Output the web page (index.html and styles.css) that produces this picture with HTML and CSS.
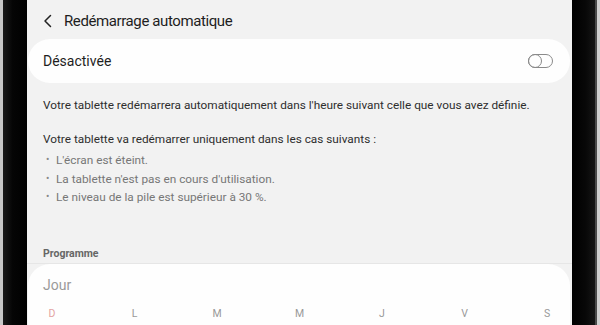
FILE: index.html
```html
<!DOCTYPE html>
<html lang="fr">
<head>
<meta charset="utf-8">
<link rel="stylesheet" href="styles.css">
</head>
<body>
<div class="device">
  <div class="bezel-left"><div class="edge"></div><div class="black"></div></div>
  <div class="screen">
    <div class="header">
      <svg class="back" width="10" height="14" viewBox="0 0 10 14"><path d="M7.5 1.5 L2 7 L7.5 12.5" fill="none" stroke="#222" stroke-width="1.5" stroke-linecap="round" stroke-linejoin="round"/></svg>
      <span class="title">Redémarrage automatique</span>
    </div>
    <div class="card switch-card">
      <span class="switch-label">Désactivée</span>
      <span class="toggle"><span class="thumb"></span></span>
    </div>
    <div class="info">
      <p class="para">Votre tablette redémarrera automatiquement dans l'heure suivant celle que vous avez définie.</p>
      <p class="para second">Votre tablette va redémarrer uniquement dans les cas suivants :</p>
      <ul class="bullets">
        <li>L'écran est éteint.</li>
        <li>La tablette n'est pas en cours d'utilisation.</li>
        <li>Le niveau de la pile est supérieur à 30 %.</li>
      </ul>
    </div>
    <div class="section-label">Programme</div>
    <div class="card schedule">
      <div class="jour">Jour</div>
      <div class="days">
        <span class="day sun">D</span>
        <span class="day">L</span>
        <span class="day">M</span>
        <span class="day">M</span>
        <span class="day">J</span>
        <span class="day">V</span>
        <span class="day">S</span>
      </div>
    </div>
  </div>
  <div class="bezel-right"><div class="black"></div><div class="mid"></div><div class="edge"></div></div>
</div>
</body>
</html>
```
FILE: styles.css
```css
html, body {
  margin: 0;
  padding: 0;
  width: 600px;
  height: 325px;
  overflow: hidden;
  background: #f2f2f2;
  font-family: Roboto, "Noto Sans", sans-serif;
}
.device {
  display: flex;
  width: 600px;
  height: 325px;
}
.bezel-left {
  display: flex;
  width: 27px;
  flex: none;
}
.bezel-left .edge {
  width: 3px;
  background: #c8c8c8;
}
.bezel-left .black {
  width: 24px;
  background: linear-gradient(to right, #1a1a1a, #050505 40%, #000);
}
.bezel-right {
  display: flex;
  width: 28px;
  flex: none;
}
.bezel-right .black {
  width: 23px;
  background: linear-gradient(to right, #000, #080808 60%, #151515);
}
.bezel-right .mid {
  width: 2px;
  background: #4a4a4a;
}
.bezel-right .edge {
  width: 3px;
  background: #cfcfcf;
}
.screen {
  flex: 1;
  background: #f2f2f2;
  display: flex;
  flex-direction: column;
  overflow: hidden;
}
.header {
  height: 39px;
  display: flex;
  align-items: center;
  padding-left: 16px;
  box-sizing: border-box;
  padding-top: 2px;
}
.back {
  display: block;
}
.title {
  margin-left: 11px;
  font-size: 15px;
  letter-spacing: -0.4px;
  color: #1e1e1e;
}
.card {
  background: #fefefe;
  margin: 0 2px 0 1px;
}
.switch-card {
  height: 44px;
  border-radius: 22px;
  display: flex;
  align-items: center;
  justify-content: space-between;
  padding: 0 17px 0 15px;
}
.switch-label {
  font-size: 14px;
  color: #1e1e1e;
}
.toggle {
  position: relative;
  width: 25px;
  height: 14px;
  box-sizing: border-box;
  border: 1.3px solid #8a8a8a;
  border-radius: 7px;
}
.thumb {
  position: absolute;
  left: -1.3px;
  top: -1.3px;
  width: 14px;
  height: 14px;
  box-sizing: border-box;
  border: 1.3px solid #8a8a8a;
  border-radius: 50%;
}
.info {
  padding: 0 16px;
}
.para {
  margin: 0;
  font-size: 11.8px;
  color: #2e2e2e;
  line-height: 16px;
}
.para:first-child {
  margin-top: 14px;
}
.second {
  margin-top: 18px;
}
.bullets {
  list-style: none;
  margin: 4px 0 0 0;
  padding: 0;
}
.bullets li {
  font-size: 11.8px;
  color: #777;
  line-height: 18.5px;
  padding-left: 13px;
  position: relative;
}
.bullets li::before {
  content: "•";
  position: absolute;
  left: 3px;
  color: #888;
  font-size: 10px;
}
.section-label {
  margin-top: 39px;
  padding-left: 16px;
  font-size: 10.5px;
  font-weight: bold;
  color: #666;
  height: 16px;
  line-height: 16px;
  border-bottom: 1px solid #e6e6e6;
  padding-bottom: 1px;
}
.schedule {
  flex: 1;
  border-radius: 22px 22px 0 0;
  padding: 11px 0 0 15px;
}
.jour {
  font-size: 14px;
  color: #9a9a9a;
  line-height: 20px;
}
.days {
  display: grid;
  grid-template-columns: repeat(7, 82.5px);
  margin-top: 12px;
  margin-left: 3px;
}
.day {
  font-size: 10.5px;
  color: #999;
  width: 12px;
  text-align: center;
}
.day.sun {
  color: #e3a3a3;
}
```
